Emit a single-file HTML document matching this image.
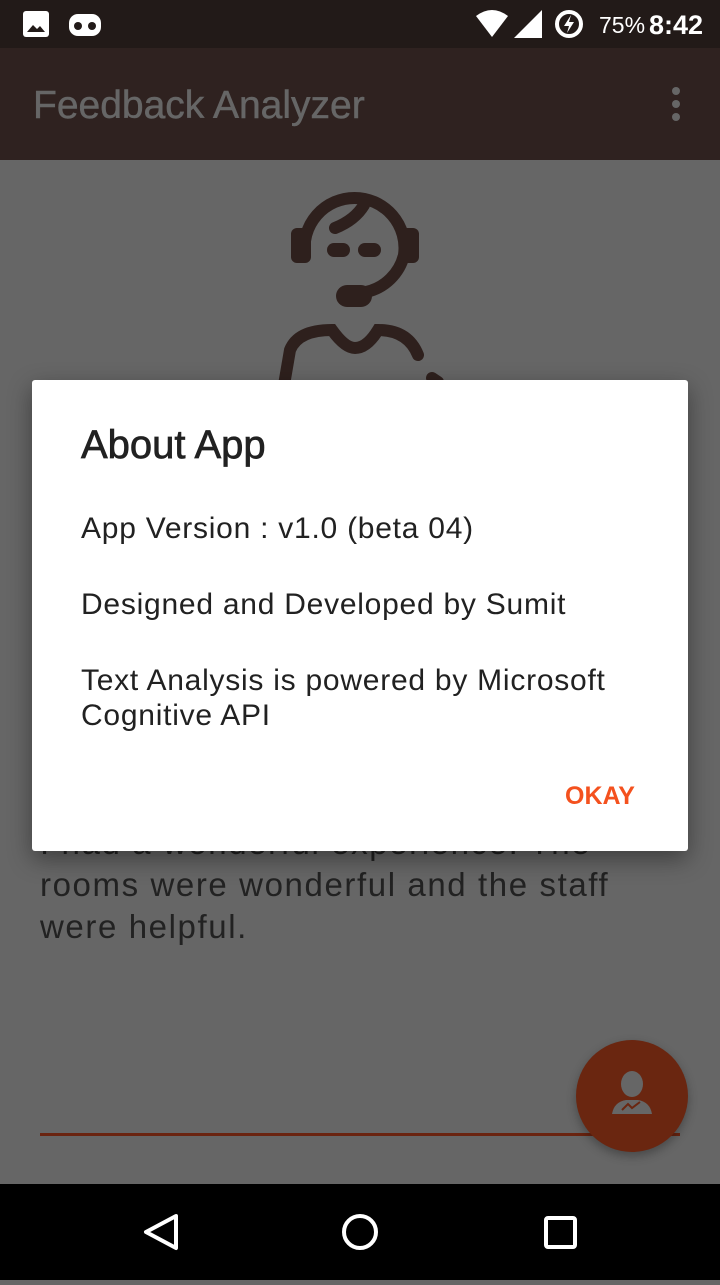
<!DOCTYPE html>
<html><head><style>
*{margin:0;padding:0;box-sizing:border-box}
body{width:720px;height:1280px;overflow:hidden;background:#666;font-family:"Liberation Sans",Roboto,sans-serif;position:relative}
.sb{position:absolute;top:0;left:0;width:720px;height:48px;background:#221a18;color:#fff}
.ab{position:absolute;top:48px;left:0;width:720px;height:112px;background:#2f2220}
.title{position:absolute;left:33px;top:84px;font-size:39px;color:#666;-webkit-text-stroke:.5px #666}
.txt{position:absolute;left:40px;top:822px;font-size:33px;line-height:42px;color:#222;letter-spacing:1.6px}
.line{position:absolute;left:40px;top:1133px;width:640px;height:3px;background:#6a2410}
.fab{position:absolute;left:576px;top:1040px;width:112px;height:112px;border-radius:50%;background:#6a2610;box-shadow:0 4px 10px rgba(0,0,0,.3)}
.nav{position:absolute;top:1184px;left:0;width:720px;height:96px;background:#000}
.dlg{position:absolute;left:32px;top:380px;width:656px;height:471px;background:#fff;border-radius:3px;box-shadow:0 8px 24px rgba(0,0,0,.4)}
.dlg h1{position:absolute;left:49px;top:43px;font-size:40px;font-weight:normal;color:#212121;-webkit-text-stroke:.7px #212121}
.dlg p{position:absolute;left:49px;font-size:30px;line-height:35px;color:#212121;letter-spacing:.75px}
.ok{position:absolute;left:533px;top:402px;font-size:25px;font-weight:bold;color:#f4511e}
</style></head><body>
<div class="sb">
<svg width="720" height="48" style="position:absolute;left:0;top:0">
<rect x="23" y="11" width="26" height="26" rx="3" fill="#fff"/><path d="M27 32 L33 25 L37 29 L40 26 L45 32Z" fill="#221a18"/>
<rect x="69" y="14" width="32" height="22" rx="9" fill="#fff"/><circle cx="78" cy="26" r="4" fill="#221a18"/><circle cx="92" cy="26" r="4" fill="#221a18"/>
<path d="M476 16 Q492 4 508 16 L492 37Z" fill="#fff"/>
<path d="M514 38 L542 10 L542 38Z" fill="#fff"/>
<circle cx="569" cy="24" r="12" fill="none" stroke="#fff" stroke-width="4"/><path d="M571 15 L564 26 L569 26 L567 33 L574 22 L569 22Z" fill="#fff"/>
<text x="599" y="33" font-size="23" fill="#fff" font-family="Liberation Sans">75%</text>
<text x="649" y="34" font-size="27" fill="#fff" font-weight="bold" font-family="Liberation Sans">8:42</text>
</svg></div>
<div class="ab"><svg width="720" height="112" style="position:absolute;left:0;top:0"><circle cx="676" cy="43" r="4" fill="#666"/><circle cx="676" cy="56" r="4" fill="#666"/><circle cx="676" cy="69" r="4" fill="#666"/></svg></div>
<div class="title">Feedback Analyzer</div>
<svg width="720" height="230" style="position:absolute;left:0;top:160px" fill="none" stroke="#2e201d" stroke-linecap="round">
<g transform="translate(0,-160)">
<path d="M305 255 A50 50 0 1 1 404 255 A50 50 0 0 1 366 292" stroke-width="12"/>
<path d="M335 228 Q355 220 364 205" stroke-width="12"/>
<rect x="291" y="228" width="20" height="35" rx="6" fill="#2e201d" stroke="none"/>
<rect x="399" y="228" width="20" height="35" rx="6" fill="#2e201d" stroke="none"/>
<line x1="334" y1="250" x2="343" y2="250" stroke-width="14"/>
<line x1="365" y1="250" x2="374" y2="250" stroke-width="14"/>
<rect x="336" y="285" width="36" height="22" rx="11" fill="#2e201d" stroke="none"/>
<path d="M284 385 L290 350 Q298 330 332 330 Q345 348 355 348 Q367 348 378 330 Q408 330 418 355" stroke-width="12"/>
<path d="M432 378 L438 382" stroke-width="12"/>
</g></svg>
<div class="txt">I had a wonderful experience. The<br>rooms were wonderful and the staff<br>were helpful.</div>
<div class="line"></div>
<div class="fab"><svg width="112" height="112"><ellipse cx="56" cy="44" rx="11" ry="13" fill="#666"/><path d="M36 74 Q38 62 50 60 L62 60 Q74 62 76 74 Z" fill="#666"/><path d="M46 70 L52 64 L56 68 L64 62" stroke="#6a2610" stroke-width="2" fill="none"/></svg></div>
<div class="dlg">
<h1>About App</h1>
<p style="top:131px">App Version : v1.0 (beta 04)</p>
<p style="top:207px">Designed and Developed by Sumit</p>
<p style="top:283px">Text Analysis is powered by Microsoft<br>Cognitive API</p>
<div class="ok">OKAY</div>
</div>
<div class="nav"><svg width="720" height="96">
<path d="M176 32 L146 48 L176 64Z" fill="none" stroke="#fff" stroke-width="4" stroke-linejoin="round"/>
<circle cx="360" cy="48" r="16" fill="none" stroke="#fff" stroke-width="4"/>
<rect x="546" y="34" width="29" height="29" rx="2" fill="none" stroke="#fff" stroke-width="4"/>
</svg></div>
</body></html>
